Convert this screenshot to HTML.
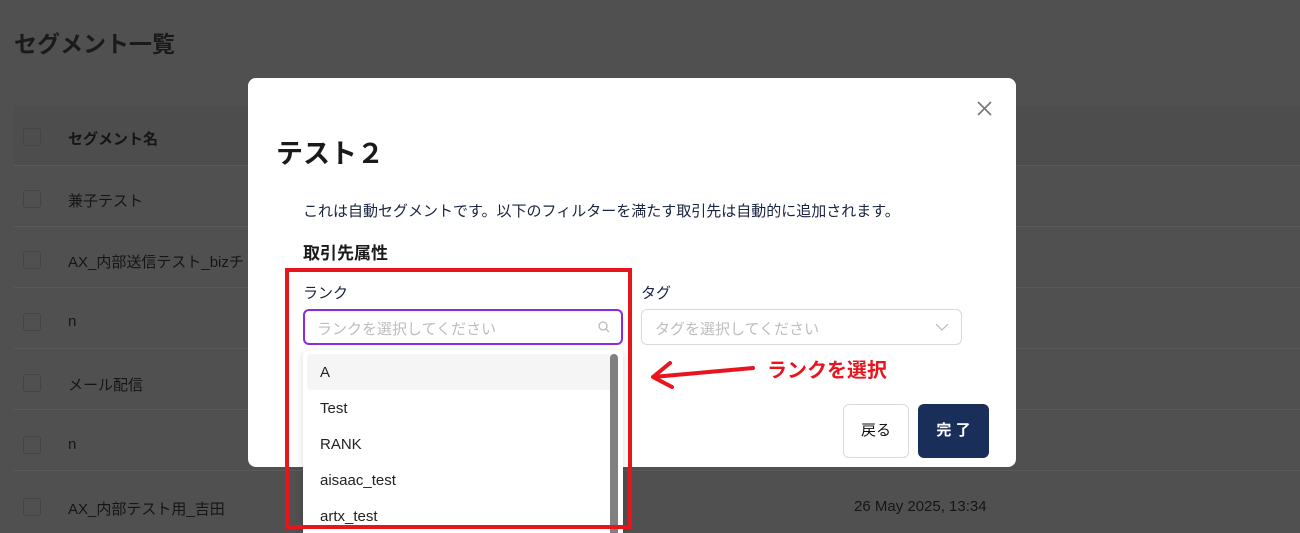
<!DOCTYPE html>
<html><head><meta charset="utf-8"><style>
*{margin:0;padding:0;box-sizing:border-box}
html{width:1300px;height:533px;overflow:hidden}
body{width:1300px;height:533px;overflow:hidden;background:#505050;font-family:"Liberation Sans","Noto Sans CJK JP",sans-serif;position:relative;color:#111}
.a{position:absolute}
.h{left:14px;top:25px;font-size:23px;font-weight:bold;color:#1a1a1a}
.hdr{left:14px;top:106px;width:1290px;height:60px;background:#4d4d4d}
.line{left:14px;width:1290px;height:1px;background:#5a5a5a}
.cb{left:23px;width:18px;height:18px;border:1px solid #444;border-radius:3px}
.rt{left:68px;font-size:15px;color:#151515}
.modal{left:248px;top:78px;width:768px;height:389px;background:#fff;border-radius:8px}
.inp{border:1px solid #d9d9d9;border-radius:6px;height:36px;font-size:15px;color:#bdbdbd;padding:8px 13px}
.dd{left:303px;top:350px;width:320px;height:183px;background:#fff;border-radius:6px 6px 0 0;box-shadow:0 2px 8px rgba(0,0,0,.15);overflow:hidden}
.it{position:absolute;left:4px;width:306px;height:36px;font-size:15px;padding:10px 13px;color:#222}
</style></head><body>
<div class="a h">セグメント一覧</div>
<div class="a hdr"></div>
<div class="a cb" style="top:128px"></div><div class="a rt" style="top:128px;font-weight:bold">セグメント名</div>
<div class="a line" style="top:165px"></div>
<div class="a cb" style="top:190px"></div><div class="a rt" style="top:190px">兼子テスト</div>
<div class="a line" style="top:226px"></div>
<div class="a cb" style="top:251px"></div><div class="a rt" style="top:251px">AX_内部送信テスト_bizチ</div>
<div class="a line" style="top:287px"></div>
<div class="a cb" style="top:313px"></div><div class="a rt" style="top:313px">n</div>
<div class="a line" style="top:348px"></div>
<div class="a cb" style="top:374px"></div><div class="a rt" style="top:374px">メール配信</div>
<div class="a line" style="top:409px"></div>
<div class="a cb" style="top:436px"></div><div class="a rt" style="top:436px">n</div>
<div class="a line" style="top:470px"></div>
<div class="a cb" style="top:498px"></div><div class="a rt" style="top:498px">AX_内部テスト用_吉田</div>
<div class="a" style="left:854px;top:498px;font-size:15px;color:#151515">26 May 2025, 13:34</div>

<div class="a modal"></div>
<svg class="a" style="left:976px;top:100px" width="17" height="17"><path d="M2 2L15 15M15 2L2 15" stroke="#777" stroke-width="1.6"/></svg>
<div class="a" style="left:276px;top:132px;font-size:27px;font-weight:bold;color:#1a1a1a">テスト２</div>
<div class="a" style="left:303px;top:200px;font-size:15px;color:#1a2440">これは自動セグメントです。以下のフィルターを満たす取引先は自動的に追加されます。</div>
<div class="a" style="left:303px;top:239px;font-size:17px;font-weight:bold;color:#1a1a1a">取引先属性</div>
<div class="a" style="left:303px;top:282px;font-size:15px;color:#1a2440">ランク</div>
<div class="a" style="left:641px;top:282px;font-size:15px;color:#1a2440">タグ</div>
<div class="a inp" style="left:303px;top:309px;width:320px;border:2px solid #8a2be2;padding:7px 12px">ランクを選択してください</div>
<svg class="a" style="left:597px;top:320px" width="14" height="14"><circle cx="6" cy="6" r="4" fill="none" stroke="#bbb" stroke-width="1.3"/><path d="M9 9L12 12" stroke="#bbb" stroke-width="1.3"/></svg>
<div class="a inp" style="left:641px;top:309px;width:321px">タグを選択してください</div>
<svg class="a" style="left:935px;top:322px" width="14" height="10"><path d="M1 2L7 8L13 2" fill="none" stroke="#bbb" stroke-width="1.2"/></svg>
<div class="a dd">
<div class="it" style="top:4px;background:#f5f5f5;border-radius:4px">A</div>
<div class="it" style="top:40px">Test</div>
<div class="it" style="top:76px">RANK</div>
<div class="it" style="top:112px">aisaac_test</div>
<div class="it" style="top:148px">artx_test</div>
<div class="a" style="left:307px;top:4px;width:8px;height:190px;background:#808080;border-radius:4px"></div>
</div>
<div class="a" style="left:843px;top:404px;width:66px;height:54px;border:1px solid #d9d9d9;border-radius:6px;font-size:15px;text-align:center;line-height:52px;background:#fff">戻る</div>
<div class="a" style="left:918px;top:404px;width:71px;height:54px;background:#1a2e5a;border-radius:6px;font-size:15px;color:#fff;text-align:center;line-height:54px;font-weight:bold">完 了</div>

<div class="a" style="left:285px;top:268px;width:347px;height:261px;border:4px solid #e8141e"></div>
<svg class="a" style="left:645px;top:358px" width="115" height="35"><path d="M108 10L8 19M8 19L25 5M8 19L27 29" fill="none" stroke="#e8141e" stroke-width="4" stroke-linecap="round"/></svg>
<div class="a" style="left:767px;top:354px;font-size:20px;font-weight:bold;color:#e8141e">ランクを選択</div>
</body></html>
